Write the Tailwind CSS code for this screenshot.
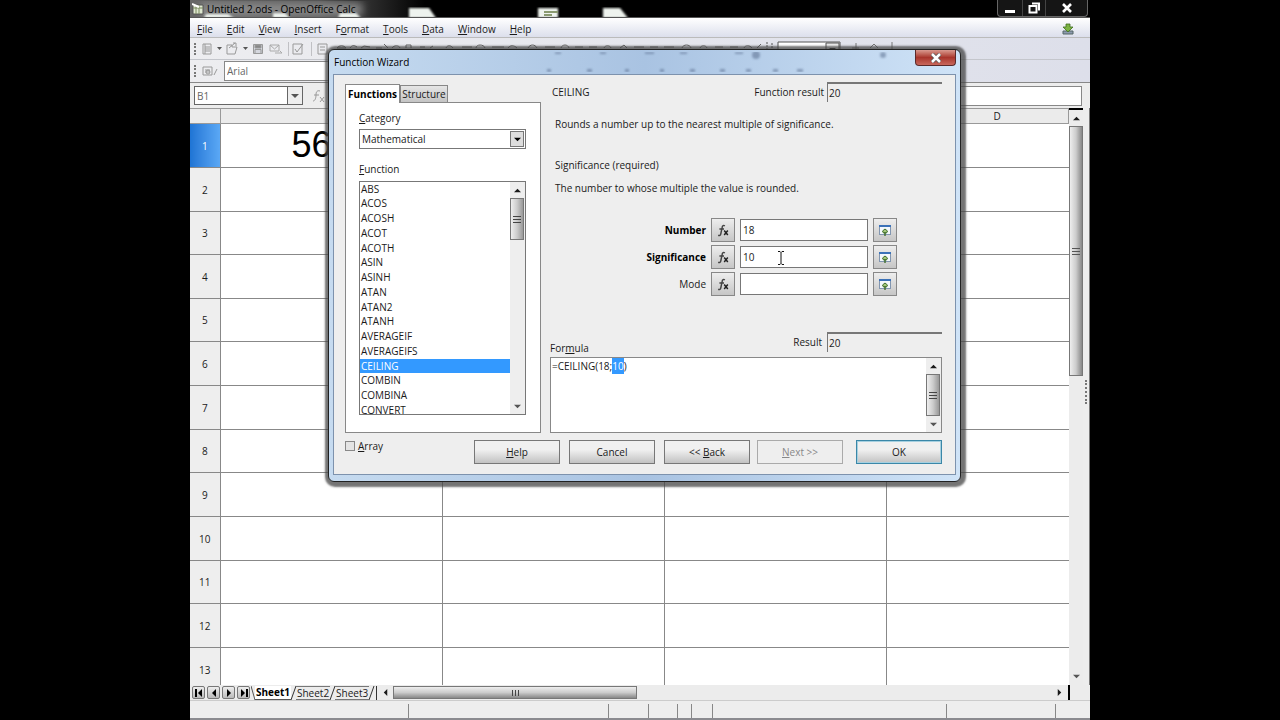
<!DOCTYPE html>
<html lang="en">
<head>
<meta charset="utf-8">
<title>Untitled 2.ods - OpenOffice Calc</title>
<script src="https://cdn.jsdelivr.net/npm/@tailwindcss/browser@4"></script>
</head>
<body class="bg-black font-['Open_Sans','Noto_Sans',sans-serif] text-[10px] leading-4 text-[#1a1a1a]">
<svg class="hidden">
  <symbol id="up" viewBox="0 0 8 8"><path d="M0 6L4 2l4 4z" fill="currentColor"/></symbol>
  <symbol id="down" viewBox="0 0 8 8"><path d="M0 2h8L4 6z" fill="currentColor"/></symbol>
  <symbol id="left" viewBox="0 0 8 8"><path d="M6 0v8L2 4z" fill="currentColor"/></symbol>
  <symbol id="right" viewBox="0 0 8 8"><path d="M2 0v8l4-4z" fill="currentColor"/></symbol>
  <symbol id="fx" viewBox="0 0 14 14"><path d="M8.800 3C7.600 2 6.500 2.600 6.200 4.200L4.800 10.800C4.500 12.400 3.500 12.800 2.200 12.200M3.400 6h4.600" fill="none" stroke="#444" stroke-width="1.500"/><path d="M8.200 7.500l3.600 4.500M11.800 7.500l-3.600 4.500" fill="none" stroke="#222" stroke-width="1.500"/></symbol>
  <symbol id="shrink" viewBox="0 0 14 14"><rect x="1.500" y="2.500" width="11" height="9" fill="#f4f8fc" stroke="#8296b0"/><path d="M1 2h12v2H1z" fill="#3c72b8"/><path d="M7 6l2.500 2L8.500 10h-3L4.500 8z" fill="#a5c87a" stroke="#3e6d2a" stroke-width="1"/><path d="M7 9v4" stroke="#3e6d2a" stroke-width="1.400"/></symbol>
</svg>

<div class="relative mx-auto flex h-screen w-full max-w-[900px] flex-col overflow-hidden bg-[#ededed]">
  <!-- title bar -->
  <header class="relative flex h-[18px] shrink-0 items-center overflow-hidden border-b border-[#555] bg-black">
    <svg class="absolute inset-0 h-full w-full" aria-hidden="true">
      <defs><filter id="b"><feGaussianBlur stdDeviation="1.200"/></filter><filter id="g" x="-20%" width="140%"><feGaussianBlur stdDeviation="4"/></filter>
      <linearGradient id="tg" x1="0" x2="1"><stop offset="0" stop-color="#666"/><stop offset=".55" stop-color="#555"/><stop offset="1" stop-color="#000"/></linearGradient></defs>
      <rect width="235" height="18" fill="url(#tg)"/>
      <rect x="10" y="3" width="162" height="13" fill="#8a8a8a" filter="url(#g)"/>
      <g fill="#eef3ee" filter="url(#b)"><path d="M14 18l2-4h22l6 4zM83 18v-5h12l5 5zM148 18l2-5h16l5 5zM219 18V8h20l7 10zM348 18V8h20v10zM413 18V8h17l8 10z"/></g>
      <path d="M354 12h14M354 15h8" stroke="#8a9a70" stroke-width="2"/>
    </svg>
    <svg class="relative ml-[2px] h-3 w-3" viewBox="0 0 12 12"><path d="M1 2h10v9H1z" fill="#dfe8d0" stroke="#555"/><path d="M1 5h10M4 2v9M7 2v9" stroke="#7a8a60"/><path d="M0 1l7 3" stroke="#fff" stroke-width="2"/></svg>
    <h1 class="relative ml-[3px] whitespace-nowrap text-black">Untitled 2.ods - OpenOffice Calc</h1>
    <div class="relative mr-[2px] ml-auto flex h-[17px] rounded-b border border-t-0 border-[#666] bg-[#151515]">
      <button aria-label="Minimize" class="flex w-[25px] items-center justify-center border-r border-[#444]"><svg class="h-3 w-3" viewBox="0 0 12 12"><path d="M1 8h10v3H1z" fill="#fff"/></svg></button>
      <button aria-label="Restore" class="flex w-[23px] items-center justify-center border-r border-[#444]"><svg class="h-3 w-3" viewBox="0 0 12 12"><path d="M4 1.500h7v7M1.500 4h7v6.500h-7z" fill="none" stroke="#fff" stroke-width="2"/></svg></button>
      <button aria-label="Close" class="flex w-[41px] items-center justify-center"><svg class="h-3 w-3" viewBox="0 0 12 12"><path d="M2 2l8 8M10 2l-8 8" stroke="#fff" stroke-width="2.600"/></svg></button>
    </div>
  </header>
  <!-- menu bar -->
  <nav class="flex h-5 shrink-0 items-center border-b border-[#bbb] bg-linear-to-b from-white to-[#dcdfec] pt-[2px] pr-4 pl-[7px]">
    <div class="flex gap-[14px]">
      <button><u>F</u>ile</button><button><u>E</u>dit</button><button><u>V</u>iew</button><button><u>I</u>nsert</button><button>F<u>o</u>rmat</button><button><u>T</u>ools</button><button><u>D</u>ata</button><button><u>W</u>indow</button><button><u>H</u>elp</button>
    </div>
    <button aria-label="Download updates" class="ml-auto"><svg class="h-3 w-3" viewBox="0 0 12 12"><path d="M1 8h10v3H1z" fill="#8c9aae" stroke="#566"/><path d="M4 1h4v3h3L6 9 1 4h3z" fill="#7cb342" stroke="#3f6d20" stroke-width=".8"/></svg></button>
  </nav>
  <!-- standard toolbar -->
  <div class="flex h-[22px] shrink-0 items-center border-b border-[#c4c6cc] bg-linear-to-r from-[#ededf0] to-[#dddfea] pl-1 text-[#999]">
    <span class="h-3 border-l-2 border-dotted border-[#777]"></span>
    <svg class="ml-1 h-5 w-[860px] shrink-0" viewBox="0 0 860 20" fill="none" stroke="currentColor">
      <path d="M3 5h8v10H3zM5 8h5M5 10h5M5 12h5M5 5v10"/><path d="M17 8h5l-2.500 3z" fill="#555" stroke="none"/>
      <path d="M27 6h5v2h5l-2 7h-8zM29 9l6-5M33 4h3v3"/><path d="M43 8h5l-2.500 3z" fill="#555" stroke="none"/>
      <path d="M53.500 5.500h9v9h-9zM55 10.500h6v4h-6z" fill="#d5d7de"/><path d="M55 6h6v3h-6z" fill="#888"/>
      <path d="M70 6h9v6h-9zM70 6l4.500 4L79 6M75 14h7l-2-2" stroke="#aaa"/><path d="M88.500 3v14M111.500 3v14" stroke="#c0c0c4"/>
      <path d="M93 5h9v10h-9zM95 10l2 3 6-8"/><path d="M118 5h9v10h-9zM120 8h5M120 11h5"/>
      <g stroke="#666"><path d="M137 9a5 4 0 0 1 9 0zM150 9c2-3 4-3 7-1M161 9l3-2 6 1M176 9h6M184 5l4 4M192 9c2-3 7-3 8 0M206 9V6h5v3M220 8h5M230 9l3-2M246 9c1-3 5-3 7 0M262 8h10M276 9c0-4 8-4 9 0M292 8h12M308 9c2-3 6-3 9 0M328 9c2-4 7-4 9 0M345 8h10M361 9c1-4 7-4 8 0M375 8h8M389 8h8M404 9c1-3 6-3 7 0M420 9l4-3 3 3M434 8h10M450 8h8M464 8h10M482 9c1-4 8-4 9 0M500 9c1-3 6-3 7 0M515 8h8M530 8h8M544 9c1-3 6-3 8 0M557 9l4-4"/></g>
      <g stroke="#555"><path d="M567 3v14M572 4v5" stroke-dasharray="2 1"/><path d="M578 17V3h62v14" fill="#fff"/><path d="M626 4h13v12h-13z" fill="#eee"/><path d="M629 9h7l-3.500 3z" fill="#111" stroke="none"/><path d="M656 4v6M652 9h7M670 9l4-4 4 4M692 3v7" stroke="#777"/></g>
    </svg>
  </div>
  <!-- formatting toolbar -->
  <div class="flex h-[23px] shrink-0 items-center border-b border-[#888] bg-linear-to-r from-[#ededf0] to-[#dddfea] pl-1">
    <span class="h-3 border-l-2 border-dotted border-[#777]"></span>
    <svg class="mx-[6px] h-3 w-4" viewBox="0 0 16 12" fill="none" stroke="#999"><path d="M1 2h9v8H1zM3 5h5M3 7h5M12 10l3-6"/><circle cx="6" cy="7" r="2"/></svg>
    <input aria-label="Font name" value="Arial" class="h-5 w-[150px] border border-[#888] bg-white px-[2px] text-[#666]">
  </div>
  <!-- formula bar -->
  <div class="flex h-[25px] shrink-0 items-center bg-[#ededed] pr-2 pl-1">
    <div class="flex h-[19px] w-[109px] border border-[#666] bg-white">
      <input aria-label="Name box" value="B1" class="w-0 flex-1 px-[2px] text-[#666]">
      <button aria-label="Name list" class="flex w-[15px] items-center justify-center border-l border-[#666] bg-[#eee] text-[#555]"><svg class="size-2"><use href="#down"/></svg></button>
    </div>
    <svg class="ml-2 h-4 w-5" viewBox="0 0 20 16" fill="none" stroke="#999"><path d="M9 3c-3-1-4 1-4 4s-1 6-3 6M3 7h5M9 9l4 5M13 9l-4 5"/></svg>
    <input aria-label="Formula input" class="ml-2 h-5 flex-1 border border-[#888] bg-white">
  </div>
  <!-- sheet -->
  <div class="flex min-h-0 flex-1">
    <div class="min-w-0 flex-1 overflow-hidden bg-white">
      <table class="w-full table-fixed border-collapse text-center">
        <colgroup><col class="w-[30px]"><col class="w-[222px]"><col class="w-[222px]"><col class="w-[222px]"><col></colgroup>
        <thead><tr class="border-y border-[#999] bg-[#ebebeb] *:h-[15px] *:border-r *:border-[#999] *:p-0 *:font-normal *:leading-[14px]"><th></th><th>A</th><th>B</th><th>C</th><th><span class="block pl-10">D</span></th></tr></thead>
        <tbody id="rows"></tbody>
      </table>
    </div>
    <div class="flex w-[14px] shrink-0 flex-col border-t-2 border-black bg-[#ececec]">
      <button aria-label="Scroll up" class="flex h-4 items-center justify-center"><svg class="size-[7px]"><use href="#up"/></svg></button>
      <div class="flex h-[250px] flex-col items-center justify-center gap-[2px] border border-[#777] bg-linear-to-r from-[#eee] via-[#ccc] to-[#888] *:h-px *:w-2 *:bg-[#555]"><i></i><i></i><i></i></div>
      <button aria-label="Scroll down" class="mt-auto flex h-[18px] items-center justify-center text-[#555]"><svg class="size-[7px]"><use href="#down"/></svg></button>
    </div>
    <div class="flex w-[7px] shrink-0 justify-center border-r border-[#777] bg-[#ededed] pt-[272px]"><span class="h-6 border-l-2 border-dotted border-[#777]"></span></div>
  </div>
  <!-- sheet tabs and horizontal scroll -->
  <div class="flex h-[15px] shrink-0 items-center bg-[#ececec] pl-[2px]">
    <div class="flex gap-[2px] *:flex *:size-[13px] *:items-center *:justify-center *:rounded-[2px] *:border *:border-[#777] *:bg-linear-to-b *:from-[#eee] *:to-[#bbb] *:text-black">
      <button aria-label="First sheet"><svg class="size-2" viewBox="0 0 8 8"><path d="M0 0h2v8H0zM7 0v8L3 4z"/></svg></button>
      <button aria-label="Previous sheet"><svg class="size-2"><use href="#left"/></svg></button>
      <button aria-label="Next sheet"><svg class="size-2"><use href="#right"/></svg></button>
      <button aria-label="Last sheet"><svg class="size-2" viewBox="0 0 8 8"><path d="M6 0h2v8H6zM1 0v8l4-4z"/></svg></button>
    </div>
    <div class="ml-px flex h-full items-center whitespace-nowrap">
      <svg class="h-[14px] w-1" viewBox="0 0 4 14"><path d="M0 0l4 14" stroke="#555"/></svg>
      <button class="h-[14px] border-b border-[#555] bg-white px-[1px] leading-[13px] font-bold text-black">Sheet1</button>
      <svg class="h-[14px] w-[5px]" viewBox="0 0 5 14"><path d="M0 14L5 0" stroke="#333"/></svg>
      <button class="h-[14px] border-y border-[#777] px-[1px] leading-3">Sheet2</button>
      <svg class="h-[14px] w-[5px]" viewBox="0 0 5 14"><path d="M0 14L5 0" stroke="#333"/></svg>
      <button class="h-[14px] border-y border-[#777] px-[1px] leading-3">Sheet3</button>
      <svg class="h-[14px] w-2" viewBox="0 0 8 14"><path d="M0 14L5 0M7.500 0v14" stroke="#333"/></svg>
    </div>
    <button aria-label="Scroll left" class="flex h-full w-4 items-center justify-center"><svg class="size-[7px]"><use href="#left"/></svg></button>
    <div class="flex h-[13px] w-[244px] items-center justify-center gap-[2px] border border-[#777] bg-linear-to-b from-[#eee] via-[#ccc] to-[#888] *:h-[6px] *:w-px *:bg-[#444]"><i></i><i></i><i></i></div>
    <button aria-label="Scroll right" class="mr-[5px] ml-auto"><svg class="size-[7px]"><use href="#right"/></svg></button>
    <span class="mr-5 h-full w-[2px] bg-black"></span>
  </div>
  <!-- status bar -->
  <footer class="flex h-5 shrink-0 items-stretch border-t border-b-2 border-t-[#ccc] border-b-[#8b8b90] bg-[#eee] pt-[3px] *:border-r *:border-[#888]">
    <span class="w-[219px]"></span><span class="w-[200px]"></span><span class="w-10"></span><span class="w-[29px]"></span><span class="w-[14px]"></span><span class="w-[21px]"></span><span class="w-[234px]"></span><span class="w-[109px]"></span>
  </footer>

  <!-- function wizard -->
  <section role="dialog" aria-labelledby="wiz" class="absolute top-[49px] left-[138px] flex w-[633px] flex-col rounded-md border border-[#222] bg-[#bdd6f0] bg-linear-to-r from-[#c6dbf0] via-[#a9c3e2] to-[#cfe3f7] px-1 pb-[6px] shadow-[1px_1px_2px_4px_rgba(70,70,70,0.75)]">
    <div class="flex h-6 items-center pl-[1px]">
      <h2 id="wiz" class="text-black">Function Wizard</h2>
      <svg class="ml-auto h-5 w-[420px]" viewBox="0 0 420 20" aria-hidden="true"><g fill="#44597a" opacity=".45" filter="url(#b)"><circle cx="261" cy="3" r="4"/><circle cx="388" cy="3" r="3"/><path d="M60 0h6v2h-6zM105 0h6v2h-6zM150 0h9v2h-9zM185 0h7v2h-7zM240 0h8v2h-8zM52 17h4v3h-4zM92 17h5v3h-5zM130 17h4v3h-4zM165 17h4v3h-4zM195 17h5v3h-5zM225 17h5v3h-5zM251 17h5v3h-5zM278 17h5v3h-5zM302 17h6v3h-6z"/></g></svg>
      <button aria-label="Close dialog" class="flex h-4 w-[41px] items-center justify-center self-start rounded-b border border-t-0 border-[#5b2a2a] bg-linear-to-b from-[#d99a90] via-[#a8352c] to-[#c8675c]"><svg class="h-[10px] w-3" viewBox="0 0 12 10"><path d="M2 1l8 8M10 1L2 9" stroke="#555" stroke-width="4"/><path d="M2 1l8 8M10 1L2 9" stroke="#fff" stroke-width="2.500"/></svg></button>
    </div>
    <div class="border border-[#7d92ad] bg-[#eeeeee] pt-[7px] pr-[13px] pb-[10px] pl-[11px]">
      <div class="flex gap-[9px]">
        <!-- function picker -->
        <div class="flex w-[196px] flex-col">
          <div role="tablist" class="flex items-end pt-[2px]">
            <button role="tab" aria-selected="true" class="relative z-10 -mb-px h-[19px] w-[55px] border border-b-0 border-[#888] bg-white font-bold text-black">Functions</button>
            <button role="tab" aria-selected="false" class="h-[17px] w-12 border border-b-0 border-[#888] bg-linear-to-b from-[#e6e6e6] to-[#c4c4c4]">Structure</button>
          </div>
          <div class="flex h-[331px] flex-col border border-[#888] bg-white px-[13px] pt-[7px]">
            <label for="cat"><u>C</u>ategory</label>
            <div class="mt-[3px] flex h-5 w-[167px] border border-[#777]">
              <select id="cat" class="w-0 flex-1 appearance-none px-[2px]"><option>Mathematical</option></select>
              <span class="m-px flex w-[14px] items-center justify-center border border-[#777] bg-[#ddd] text-black"><svg class="size-[7px]"><use href="#down"/></svg></span>
            </div>
            <span id="fl" class="mt-3"><u>F</u>unction</span>
            <div class="mt-1 flex h-[234px] w-[167px] border border-[#777]">
              <ul role="listbox" aria-labelledby="fl" id="fns" class="flex-1 overflow-hidden"></ul>
              <div class="flex w-[15px] flex-col bg-[#eee]">
                <button aria-label="Scroll list up" class="flex h-4 items-center justify-center"><svg class="size-[7px]"><use href="#up"/></svg></button>
                <div class="mr-px flex h-[42px] flex-col items-center justify-center gap-[2px] border border-[#777] bg-linear-to-r from-[#eee] via-[#ccc] to-[#999] *:h-px *:w-2 *:bg-[#444]"><i></i><i></i><i></i></div>
                <button aria-label="Scroll list down" class="mt-auto flex h-4 items-center justify-center text-[#555]"><svg class="size-[7px]"><use href="#down"/></svg></button>
              </div>
            </div>
          </div>
        </div>
        <!-- arguments -->
        <div class="flex min-w-0 flex-1 flex-col">
          <div class="flex h-5 items-center">
            <span class="pl-[2px]">CEILING</span>
            <label for="fr" class="mr-[3px] ml-auto">Function result</label>
            <input id="fr" readonly value="20" class="h-5 w-[115px] border-t-2 border-l border-[#777] px-[1px]">
          </div>
          <p class="mt-[14px] pl-[5px]">Rounds a number up to the nearest multiple of significance.</p>
          <p class="mt-[25px] pl-[5px]">Significance (required)</p>
          <p class="mt-[7px] pl-[5px]">The number to whose multiple the value is rounded.</p>
          <div id="args" class="mt-[22px] grid grid-cols-[156px_24px_128px_24px] items-center gap-x-[5px] gap-y-[3px]"></div>
          <div class="mt-auto flex h-6">
            <label for="fm" class="self-end">For<u>m</u>ula</label>
            <label for="rs" class="mt-[2px] mr-[5px] ml-auto">Result</label>
            <input id="rs" readonly value="20" class="h-5 w-[115px] border-t-2 border-l border-[#777] px-[1px]">
          </div>
          <div class="mt-[1px] flex h-[76px] border border-[#888] bg-white">
            <textarea id="fm" spellcheck="false" class="flex-1 resize-none overflow-hidden px-[1px] leading-4 outline-none selection:bg-[#3399ff] selection:text-white">=CEILING(18;10)</textarea>
            <div class="flex w-[15px] flex-col bg-[#eee]">
              <button aria-label="Scroll formula up" class="flex h-4 items-center justify-center"><svg class="size-[7px]"><use href="#up"/></svg></button>
              <div class="mr-px flex h-[42px] flex-col items-center justify-center gap-[2px] border border-[#777] bg-linear-to-r from-[#eee] via-[#ccc] to-[#999] *:h-px *:w-2 *:bg-[#444]"><i></i><i></i><i></i></div>
              <button aria-label="Scroll formula down" class="mt-auto flex h-4 items-center justify-center text-[#555]"><svg class="size-[7px]"><use href="#down"/></svg></button>
            </div>
          </div>
        </div>
      </div>
      <!-- dialog buttons -->
      <div class="mt-[7px] flex justify-between">
        <label class="flex h-3 items-center gap-[3px]"><input type="checkbox" class="size-[10px] appearance-none border border-[#888] bg-[#e4e4e4]"><span><u>A</u>rray</span></label>
        <div class="flex gap-[9px] *:h-6 *:w-[86px] *:border *:border-[#777] *:bg-linear-to-b *:from-[#f0f0f0] *:from-40% *:to-[#c2c2c2]">
          <button><u>H</u>elp</button><button>Cancel</button><button>&lt;&lt; <u>B</u>ack</button>
          <button disabled class="-ml-[2px] border-[#aaa]! bg-none! text-[#888]"><u>N</u>ext &gt;&gt;</button>
          <button class="ml-1 border-[#3a87a8]! shadow-[inset_0_0_0_1px_#a6d0e0]">OK</button>
        </div>
      </div>
    </div>
  </section>
  <!-- text pointer -->
  <svg class="absolute top-[251px] left-[587px] h-[14px] w-2" viewBox="0 0 8 14" fill="none" stroke="#111"><path d="M1 .5h2l1 1 1-1h2M4 1.500v11M1 13.500h2l1-1 1 1h2"/></svg>
</div>
<script>
const heights = ['h-11','h-11','h-[43px]','h-11','h-[43px]','h-11','h-11','h-[43px]','h-11','h-11','h-[43px]','h-11','h-11'];
document.getElementById('rows').innerHTML = heights.map((h, i) =>
  `<tr class="${h} border-b border-[#888]"><th class="border-r border-[#888] p-0 font-normal ${i ? 'bg-[#eee]' : 'bg-linear-to-r from-[#1f74d4] to-[#5ba8f5] text-white'}">${i + 1}</th>` +
  `<td class="border-r border-[#888] p-0 text-left">${i ? '' : `<span class="block pb-[2px] pl-[71px] font-['Liberation_Sans',sans-serif] text-[36px] leading-10 text-black">56</span>`}</td>` +
  `<td class="border-r border-[#888]"></td><td class="border-r border-[#888]"></td><td></td></tr>`).join('');
const names = 'ABS ACOS ACOSH ACOT ACOTH ASIN ASINH ATAN ATAN2 ATANH AVERAGEIF AVERAGEIFS CEILING COMBIN COMBINA CONVERT'.split(' ');
document.getElementById('fns').innerHTML = names.map((n, i) =>
  `<li role="option" class="pl-[1px] ${i % 4 ? 'h-[15px]' : 'h-[14px]'} leading-[15px] ${n === 'CEILING' ? 'bg-[#3399ff] text-white' : ''}" aria-selected="${n === 'CEILING'}">${n}</li>`).join('');
document.getElementById('args').innerHTML = [['Number','18',1],['Significance','10',1],['Mode','',0]].map(([l, v, b]) =>
  `<label for="a${l}" class="text-right ${b ? 'font-bold text-black' : ''}">${l}</label>` +
  `<button aria-label="Insert function for ${l}" class="flex size-6 items-center justify-center border border-[#888] bg-linear-to-b from-[#eee] to-[#c6c6c6]"><svg class="size-[14px]"><use href="#fx"/></svg></button>` +
  `<input id="a${l}" value="${v}" class="h-[22px] border border-[#777] bg-white px-[2px]">` +
  `<button aria-label="Shrink for ${l}" class="flex size-6 items-center justify-center border border-[#888] bg-linear-to-b from-[#eee] to-[#c6c6c6]"><svg class="size-[14px]"><use href="#shrink"/></svg></button>`).join('');
const f = document.getElementById('fm');
f.focus();
f.setSelectionRange(12, 14);
</script>
</body>
</html>
